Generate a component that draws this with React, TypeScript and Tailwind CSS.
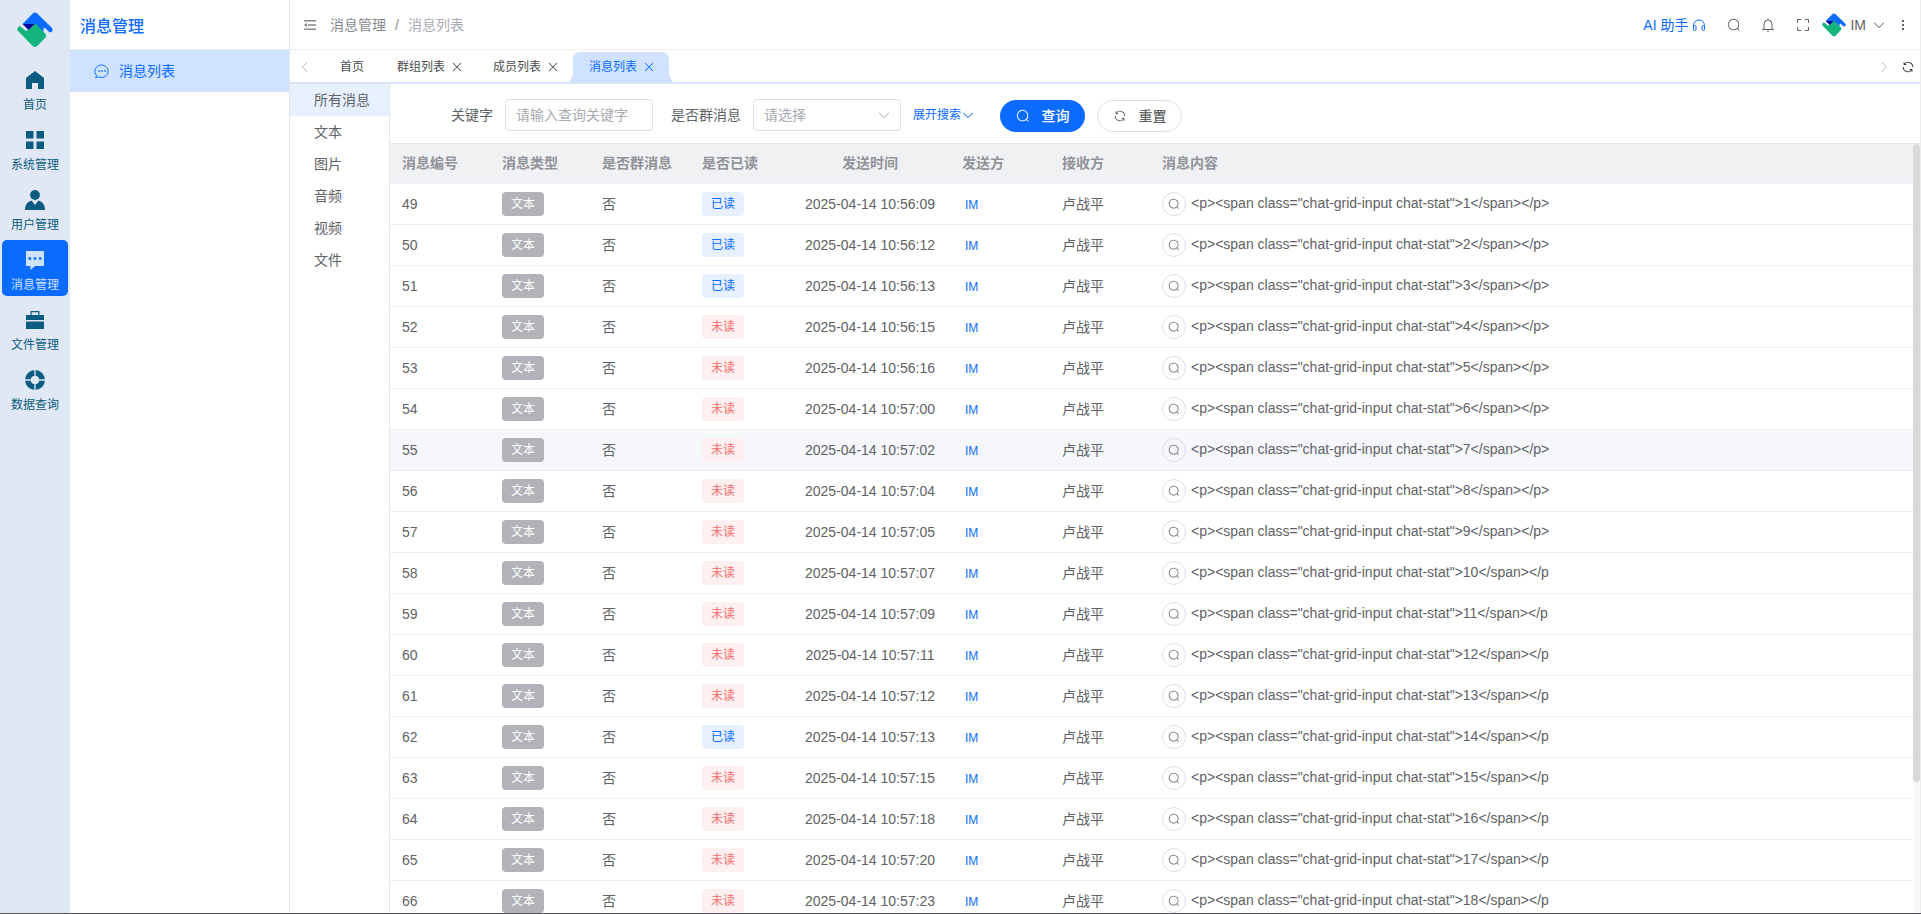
import type { ReactNode } from 'react';
import clsx from 'clsx';

interface IconProps {
  className?: string;
}

interface Message {
  id: number;
  read: boolean;
  time: string;
  content: string;
}

const TIMES = [
  '10:56:09', '10:56:12', '10:56:13', '10:56:15', '10:56:16', '10:57:00',
  '10:57:02', '10:57:04', '10:57:05', '10:57:07', '10:57:09', '10:57:11',
  '10:57:12', '10:57:13', '10:57:15', '10:57:18', '10:57:20', '10:57:23',
];

const READ_IDS = [49, 50, 51, 62];
const HOVERED_ID = 55;

const MESSAGES: Message[] = TIMES.map((time, i) => ({
  id: 49 + i,
  read: READ_IDS.includes(49 + i),
  time: `2025-04-14 ${time}`,
  content: `<p><span class="chat-grid-input chat-stat">${i + 1}</span></p${i < 9 ? '>' : ''}`,
}));

const CATEGORIES = ['所有消息', '文本', '图片', '音频', '视频', '文件'];

/* ---------- Icons ---------- */

function GlyphIcon({ className, d }: IconProps & { d: string }) {
  return (
    <svg viewBox="0 0 1024 1024" fill="currentColor" className={clsx('flex-shrink-0', className)} aria-hidden="true">
      <path d={d} />
    </svg>
  );
}

const SEARCH =
  'm795.904 750.72 124.992 124.928a32 32 0 0 1-45.248 45.248L750.656 795.904a416 416 0 1 1 45.248-45.248zM480 832a352 352 0 1 0 0-704 352 352 0 0 0 0 704z';
const ARROW_DOWN =
  'M831.872 340.864 512 652.672 192.128 340.864a30.592 30.592 0 0 0-42.752 0 29.12 29.12 0 0 0 0 41.6L489.664 714.24a32 32 0 0 0 44.672 0l340.288-331.712a29.12 29.12 0 0 0 0-41.728 30.592 30.592 0 0 0-42.752 0z';
const REFRESH =
  'M771.776 794.88A384 384 0 0 1 128 512h64a320 320 0 0 0 555.712 216.448H654.72a32 32 0 1 1 0-64h149.056a32 32 0 0 1 32 32v148.928a32 32 0 1 1-64 0v-50.56zM276.288 295.616h92.992a32 32 0 0 1 0 64H220.16a32 32 0 0 1-32-32V178.56a32 32 0 0 1 64 0v50.56A384 384 0 0 1 896.128 512h-64a320 320 0 0 0-555.776-216.384z';
const CLOSE =
  'M764.288 214.592 512 466.88 259.712 214.592a31.936 31.936 0 0 0-45.12 45.12L466.752 512 214.528 764.224a31.936 31.936 0 1 0 45.12 45.184L512 557.184l252.288 252.288a31.936 31.936 0 0 0 45.12-45.12L557.12 512.064l252.288-252.352a31.936 31.936 0 1 0-45.12-45.184z';

function Logo({ className }: IconProps) {
  return (
    <svg viewBox="0 0 36 36" className={className} aria-hidden="true">
      <path
        d="M5.500 12 15.500 1.800Q18-.6 20.500 1.800L34.800 15.800Q36.500 17.800 34.800 19.700 33.500 21 32 19.700L28 16Q26.500 15 26.500 17V20L18 13z"
        fill="#0b6bff"
      />
      <path
        d="M18 11.300 28 21.300Q30.200 23.700 28 26L20.300 34Q18 36.200 15.700 34L1 19Q-.4 17 1.200 15.200 2.700 13.600 4.200 15L8 18.300Q9.500 19.300 11 18z"
        fill="#13b57d"
      />
      <path d="M5.500 12H17.500L11.500 18z" fill="#00009c" />
    </svg>
  );
}

function HomeIcon() {
  return (
    <svg viewBox="0 0 18 18" fill="currentColor" className="w-[18px] h-[18px]">
      <path d="M9 0 18 7v11h-6v-6H6v6H0V7z" />
    </svg>
  );
}

function GridIcon() {
  return (
    <svg viewBox="0 0 18 18" fill="currentColor" className="w-[18px] h-[18px]">
      <path d="M0 0h7.500v7.500H0zM10.500 0H18v7.500h-7.500zM0 10.500h7.500V18H0zM10.500 10.500H18V18h-7.500z" />
    </svg>
  );
}

function UserIcon() {
  return (
    <svg viewBox="0 0 20 20" fill="currentColor" className="w-5 h-5">
      <circle cx="10" cy="5" r="4.900" />
      <path d="M0 20c0-5 2-8 6.500-9.500L10 15l3.500-4.500C18 12 20 15 20 20z" />
    </svg>
  );
}

function ChatIcon() {
  return (
    <svg viewBox="0 0 18 19" fill="currentColor" className="w-[18px] h-[19px]">
      <path
        fillRule="evenodd"
        d="M0 0h18v15H9l-4.500 4v-4H0zM2.500 6.200v2.600h2.600V6.200zM7.700 6.200v2.600h2.600V6.200zM12.900 6.200v2.600h2.600V6.200z"
      />
    </svg>
  );
}

function BriefcaseIcon() {
  return (
    <svg viewBox="0 0 18 18" fill="currentColor" className="w-[18px] h-[18px]">
      <path fillRule="evenodd" d="M4.500 0h9v4H18v5H0V4h4.500zM5.700 1.200V4h6.600V1.200zM0 10.500h18V18H0z" />
    </svg>
  );
}

function HelpIcon() {
  return (
    <svg viewBox="0 0 20 20" className="w-5 h-5">
      <circle cx="10" cy="10" r="7" fill="none" stroke="currentColor" strokeWidth="6" />
      <path d="M10 0v20M0 10h20" stroke="#e1e8f5" strokeWidth="1.300" />
      <circle cx="10" cy="10" r="4" fill="#e1e8f5" />
    </svg>
  );
}

function ChatRoundIcon() {
  return (
    <svg viewBox="0 0 16 16" fill="none" stroke="currentColor" className="w-4 h-4">
      <path d="M2.600 12.400A6.600 6.200 0 1 1 5 14l-3.400.5z" strokeLinejoin="round" />
      <path d="M4.200 8h1.600M7.200 8h1.600M10.200 8h1.600" strokeWidth="1.600" />
    </svg>
  );
}

function FoldIcon() {
  return (
    <svg viewBox="0 0 12 12" fill="currentColor" className="w-3 h-3">
      <path d="M0 1h12v1.500H0zM4 5.200h8v1.500H4zM0 9.500h12V11H0zM3 3.800v4.400L0 6z" />
    </svg>
  );
}

function HeadsetIcon() {
  return (
    <svg viewBox="0 0 14 14" fill="none" stroke="currentColor" className="w-3.5 h-3.5">
      <path d="M1.500 11V7.500a5.500 5.500 0 0 1 11 0V11" />
      <rect x="1.500" y="7.500" width="2.500" height="5" rx="1.200" />
      <rect x="10" y="7.500" width="2.500" height="5" rx="1.200" />
    </svg>
  );
}

function BellIcon() {
  return (
    <svg viewBox="0 0 14 14" fill="none" stroke="currentColor" className="w-3.5 h-3.5">
      <path d="M7 .5v1.500M3 11.500V6a4 4 0 0 1 8 0v5.500M1 11.500h12M6 13.200h2" />
    </svg>
  );
}

function FullScreenIcon() {
  return (
    <svg viewBox="0 0 14 14" fill="none" stroke="currentColor" className="w-3.5 h-3.5">
      <path d="M1.500 5V1.500H5M9 1.500h3.500V5M12.500 9v3.500H9M5 12.500H1.500V9" />
    </svg>
  );
}

function MoreIcon() {
  return (
    <svg viewBox="0 0 14 14" fill="currentColor" className="w-3.5 h-3.5">
      <path d="M6 2h2v2H6zM6 6h2v2H6zM6 10h2v2H6z" />
    </svg>
  );
}

/* ---------- Navigation ---------- */

interface NavItem {
  label: string;
  icon: ReactNode;
  active?: boolean;
}

const NAV_ITEMS: NavItem[] = [
  { label: '首页', icon: <HomeIcon /> },
  { label: '系统管理', icon: <GridIcon /> },
  { label: '用户管理', icon: <UserIcon /> },
  { label: '消息管理', icon: <ChatIcon />, active: true },
  { label: '文件管理', icon: <BriefcaseIcon /> },
  { label: '数据查询', icon: <HelpIcon /> },
];

function NavRail() {
  return (
    <nav className="w-[70px] flex-shrink-0 bg-[#e1e8f5] pt-3">
      <Logo className="w-9 h-9 mx-auto mb-3" />
      <ul className="flex flex-col gap-1 px-0.5">
        {NAV_ITEMS.map((item) => (
          <li key={item.label}>
            <a
              href="#"
              className={clsx(
                'flex flex-col items-center h-14 pt-2.5 rounded-[5px] text-xs',
                item.active ? 'bg-[#0b6bff] text-[#cfe2ff]' : 'text-[#0b5c80]'
              )}
            >
              <span className="flex items-center justify-center h-5 mb-[7px]">{item.icon}</span>
              {item.label}
            </a>
          </li>
        ))}
      </ul>
    </nav>
  );
}

function SidePanel() {
  return (
    <aside className="w-[220px] flex-shrink-0 border-r border-[#e4e7ed]">
      <h1 className="h-[50px] flex items-center px-2.5 pt-1 border-b border-[#eeeeee] text-base font-medium text-[#0b6bff]">
        消息管理
      </h1>
      <a href="#" className="flex items-center gap-[9px] h-[42px] pl-6 bg-[#cfe2ff] text-sm text-[#0b6bff]">
        <ChatRoundIcon />
        消息列表
      </a>
    </aside>
  );
}

function Header() {
  return (
    <header className="flex items-center justify-between h-[50px] border-b border-[#eeeeee] pl-3.5 pr-2.5 text-sm">
      <div className="flex items-center text-[#86888c]">
        <button type="button" aria-label="折叠菜单">
          <FoldIcon />
        </button>
        <a href="#" className="ml-3.5">消息管理</a>
        <span className="mx-[9px]">/</span>
        <span className="text-[#a8abb2]">消息列表</span>
      </div>
      <div className="flex items-center text-[#606266]">
        <button type="button" className="flex items-center gap-1 text-[#0b6bff]">
          AI 助手
          <HeadsetIcon />
        </button>
        <button type="button" aria-label="搜索" className="ml-[21px]">
          <GlyphIcon d={SEARCH} className="w-3.5 h-3.5" />
        </button>
        <button type="button" aria-label="通知" className="ml-5">
          <BellIcon />
        </button>
        <button type="button" aria-label="全屏" className="ml-[21px]">
          <FullScreenIcon />
        </button>
        <button type="button" className="flex items-center ml-3">
          <Logo className="w-6 h-6 mr-1" />
          IM
          <GlyphIcon d={ARROW_DOWN} className="w-3.5 h-3.5 ml-1.5" />
        </button>
        <button type="button" aria-label="更多" className="ml-2.5">
          <MoreIcon />
        </button>
      </div>
    </header>
  );
}

function Tab({ label, closable = true, active }: { label: string; closable?: boolean; active?: boolean }) {
  return (
    <div
      className={clsx(
        'relative flex items-center h-[31px] pl-4',
        closable ? 'pr-[13px]' : 'pr-[17px]',
        active ? 'text-[#0b6bff]' : 'text-[#4a4c50]'
      )}
    >
      {active && (
        <svg viewBox="0 0 104 31" preserveAspectRatio="none" className="absolute inset-y-0 -left-1 w-[104px] h-full" aria-hidden="true">
          <path d="M0 31C3 27 4 25 4 21V8q0-7 8-7h80q8 0 8 7v13c0 4 1 6 4 10z" fill="#cfe2ff" />
        </svg>
      )}
      <a href="#" className="relative">{label}</a>
      {closable && (
        <button type="button" aria-label={`关闭${label}`} className="relative ml-[5px]">
          <GlyphIcon d={CLOSE} className="w-3.5 h-3.5" />
        </button>
      )}
    </div>
  );
}

function TabBar() {
  return (
    <div className="flex items-end h-[33px] border-b border-[#cfe2ff] pl-2 pr-[5px] text-xs">
      <button type="button" aria-label="向左" className="flex items-center w-[26px] h-[31px] text-[#c0c4cc]">
        <GlyphIcon d={ARROW_DOWN} className="w-3.5 h-3.5 rotate-90" />
      </button>
      <Tab label="首页" closable={false} />
      <Tab label="群组列表" />
      <Tab label="成员列表" />
      <Tab label="消息列表" active />
      <button type="button" aria-label="向右" className="flex items-center h-[31px] ml-auto text-[#c0c4cc]">
        <GlyphIcon d={ARROW_DOWN} className="w-3.5 h-3.5 -rotate-90" />
      </button>
      <button type="button" aria-label="刷新" className="flex items-center h-[31px] ml-2.5 text-[#303133]">
        <GlyphIcon d={REFRESH} className="w-3.5 h-3.5" />
      </button>
    </div>
  );
}

/* ---------- Message list ---------- */

function CategoryList() {
  return (
    <ul className="w-[100px] flex-shrink-0 border-r border-[#e4e7ed] text-sm">
      {CATEGORIES.map((name, i) => (
        <li key={name}>
          <a href="#" className={clsx('flex items-center h-8 pl-6', i === 0 && 'bg-[#e6f0ff]')}>
            {name}
          </a>
        </li>
      ))}
    </ul>
  );
}

function SearchForm() {
  return (
    <form className="flex items-center h-[60px] pl-[61px] pt-0.5 border-b border-[#e4e7ed] text-sm">
      <label htmlFor="keyword" className="mr-3">关键字</label>
      <input
        id="keyword"
        type="text"
        placeholder="请输入查询关键字"
        className="w-[148px] h-8 px-2.5 border border-[#dcdfe6] rounded placeholder:text-[#a8abb2]"
      />
      <label htmlFor="group" className="ml-[18px] mr-3">是否群消息</label>
      <div className="relative">
        <select
          id="group"
          defaultValue=""
          className="appearance-none w-[148px] h-8 px-2.5 border border-[#dcdfe6] rounded bg-white text-[#a8abb2]"
        >
          <option value="">请选择</option>
          <option value="1">是</option>
          <option value="0">否</option>
        </select>
        <GlyphIcon d={ARROW_DOWN} className="absolute right-2.5 top-[9px] w-3.5 h-3.5 text-[#a8abb2] pointer-events-none" />
      </div>
      <button type="button" className="flex items-center ml-3 text-xs text-[#0b6bff]">
        展开搜索
        <GlyphIcon d={ARROW_DOWN} className="w-3.5 h-3.5" />
      </button>
      <div className="flex gap-3 ml-[25px] pt-0.5">
        <button
          type="submit"
          className="flex items-center justify-center gap-3 w-[85px] h-8 rounded-full bg-[#0b6bff] text-white font-medium"
        >
          <GlyphIcon d={SEARCH} className="w-3.5 h-3.5" />
          查询
        </button>
        <button
          type="reset"
          className="flex items-center justify-center gap-3 w-[85px] h-8 rounded-full border border-[#dcdfe6] font-medium"
        >
          <GlyphIcon d={REFRESH} className="w-3.5 h-3.5" />
          重置
        </button>
      </div>
    </form>
  );
}

function MessageRow({ message }: { message: Message }) {
  return (
    <tr className={clsx('h-[41px] border-b border-[#ebeef5]', message.id === HOVERED_ID && 'bg-[#f5f7fa]')}>
      <td className="px-3">{message.id}</td>
      <td className="px-3">
        <span className="flex items-center justify-center w-[42px] h-6 rounded bg-[#b1b3b8] text-xs text-white">文本</span>
      </td>
      <td className="px-3">否</td>
      <td className="px-3">
        <span
          className={clsx(
            'flex items-center justify-center w-[42px] h-6 rounded text-xs',
            message.read ? 'bg-[#e6f0ff] text-[#0b6bff]' : 'bg-[#fef0f0] text-[#f56c6c]'
          )}
        >
          {message.read ? '已读' : '未读'}
        </span>
      </td>
      <td className="px-3 text-center">{message.time}</td>
      <td className="px-3">
        <a href="#" className="pl-[3px] text-xs text-[#0b6bff]">IM</a>
      </td>
      <td className="px-3">卢战平</td>
      <td className="px-3">
        <div className="flex items-center gap-[5px]">
          <button
            type="button"
            aria-label="查看消息"
            className="flex items-center justify-center w-6 h-6 rounded-full border border-[#dcdfe6]"
          >
            <GlyphIcon d={SEARCH} className="w-3 h-3" />
          </button>
          <span className="whitespace-nowrap pb-0.5">{message.content}</span>
        </div>
      </td>
    </tr>
  );
}

function MessageTable() {
  return (
    <div className="flex flex-1 min-h-0">
      <div className="flex-1 min-w-0 overflow-hidden">
        <table className="w-full table-fixed text-sm">
          <colgroup>
            <col className="w-[100px]" />
            <col className="w-[100px]" />
            <col className="w-[100px]" />
            <col className="w-[100px]" />
            <col className="w-40" />
            <col className="w-[100px]" />
            <col className="w-[100px]" />
            <col />
          </colgroup>
          <thead>
            <tr className="h-[39px] border-b border-[#ebeef5] bg-[#f0f1f3] text-left text-[#909399]">
              <th className="px-3 font-semibold">消息编号</th>
              <th className="px-3 font-semibold">消息类型</th>
              <th className="px-3 font-semibold">是否群消息</th>
              <th className="px-3 font-semibold">是否已读</th>
              <th className="px-3 font-semibold text-center">发送时间</th>
              <th className="px-3 font-semibold">发送方</th>
              <th className="px-3 font-semibold">接收方</th>
              <th className="px-3 font-semibold">消息内容</th>
            </tr>
          </thead>
          <tbody>
            {MESSAGES.map((message) => (
              <MessageRow key={message.id} message={message} />
            ))}
          </tbody>
        </table>
      </div>
      <div className="w-[7px] flex-shrink-0 bg-[#f8f8f8]">
        <div className="h-[83%] rounded-full bg-[#d8d9db]" />
      </div>
    </div>
  );
}

export default function App() {
  return (
    <div className="flex h-screen overflow-hidden bg-white border-b border-[#55565a] text-[#606266] font-['Liberation_Sans','Noto_Sans_CJK_SC',sans-serif]">
      <NavRail />
      <SidePanel />
      <div className="flex flex-col flex-1 min-w-0 border-r border-[#eeeeee]">
        <Header />
        <TabBar />
        <main className="flex flex-1 min-h-0 border-t border-[#e4e7ed]">
          <CategoryList />
          <section className="flex flex-col flex-1 min-w-0">
            <SearchForm />
            <MessageTable />
          </section>
        </main>
      </div>
    </div>
  );
}
